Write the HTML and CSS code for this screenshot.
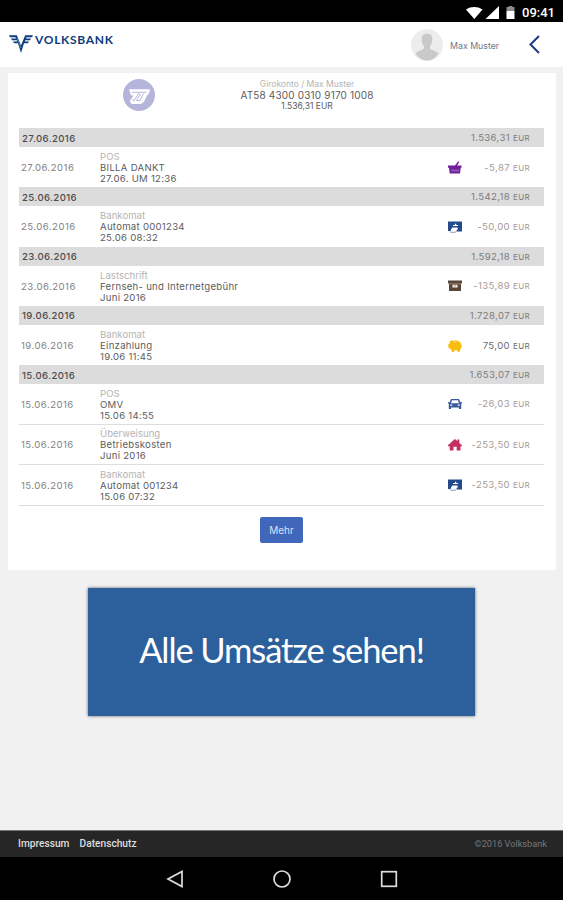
FILE: index.html
```html
<!DOCTYPE html>
<html lang="de">
  <head>
    <meta charset="UTF-8" />
    <meta name="viewport" content="width=device-width, initial-scale=1.0" />
    <title>Volksbank Umsätze</title>
    <link rel="stylesheet" href="styles.css">
  </head>
  <body>
    <svg class="sprite" aria-hidden="true">
      <symbol id="icon-basket" viewBox="0 0 14 14">
        <path fill="#6f1e9c" d="M0 4.500h7L10.200.2l1.200.8L9 4.500h4.500v2.300h-.8L12 12.500H1.700L1 6.800H0z" />
        <path stroke="#d5b5e6" stroke-width=".7" d="M4 8.500v2M6 8.500v2M8 8.500v2M10 8.500v2" />
      </symbol>
      <symbol id="icon-atm" viewBox="0 0 14 14">
        <path fill="#234b8c" d="M0 1.500h14v10H8.500L10 8H4L2.500 11H0z" />
        <path fill="#fff" d="M7 3.800h1.200v1.200H10v1H5V5h2zM4.300 7.500h5.200L7.800 11.600H2.500z" />
        <path fill="none" stroke="#6d8eb5" stroke-width=".8" d="M1.500 11.300l1.500 1h4.500l1.200-2" />
      </symbol>
      <symbol id="icon-box" viewBox="0 0 14 14">
        <path fill="#5c4638" d="M0 1.500h14v3h-1v7.500H1V4.500H0z" />
        <path fill="#a58d77" d="M1 4.400h12v.8H1z" />
        <path fill="#fff" d="M4.500 5.800h5v2.700h-5z" />
        <path fill="#a58d77" d="M5.700 6.500h2.700v1H5.700z" />
      </symbol>
      <symbol id="icon-pig" viewBox="0 0 14 14">
        <path fill="#f9bd10" d="M2 2.500L3.500 1l1.700 1C8.500.8 12.500 2 13.200 5l.6 2.500-1.300 2.200-.7 3H9.500l-.4-1.500H6.500L6.200 13H4l-.7-2.500L.3 8.500V5.200l1.200-.4z" />
        <path stroke="#fff" stroke-width=".5" d="M6 3.300l2.500-.3" />
      </symbol>
      <symbol id="icon-car" viewBox="0 0 14 14">
        <path fill="#38599a" fill-rule="evenodd" d="M3 2h8l1.500 3.400L14 5v1.300l-.8.500V12H11v-1.500H3V12H.8V6.800L0 6.300V5l1.500.4zM4 3.300L3 6.300h8l-1-3zM2.200 7.500v1.300h2V7.500zm7.600 0v1.300h2V7.500z" />
      </symbol>
      <symbol id="icon-house" viewBox="0 0 14 14">
        <path fill="#c22f60" d="M0 7.200L6.800 1l2.500 2V1.500h2V5L14 7.200v1h-1.500V12.500H8.700V8.700H5.500v3.800H1.700V8.200H0z" />
      </symbol>
    </svg>

    <div class="status-bar">
      <svg class="status-icons" viewBox="0 0 50 14">
        <path fill="#fff" d="M0 3.500C5 .2 11.500.2 16.500 3.500L8.300 13zM19.500 13L33 0v13z" />
        <path fill="#8b8b8b" d="M40.500 1h2.200V0h3.600v1h2.200v4h-8z" />
        <path fill="#fff" d="M40.500 5h8v8h-8z" />
      </svg>
      <span class="status-time">09:41</span>
    </div>

    <header class="app-header">
      <svg class="logo-mark" viewBox="0 0 24 18">
        <path fill="#0d3b7c" d="M0 .3h7.800L12 10.500 16.200.3H24l-1 2h-5.500l-.5 1.200h5L21 5.300h-4.800l-.5 1.200h4.500l-1.500 1.700H15L12 18 9 8.200H5.300L3.800 6.500h4.500l-.5-1.200H3L2 3.500h5l-.5-1.200H1z" />
        <path fill="none" stroke="#5f9cca" stroke-width=".8" d="M8 3l4 10" />
      </svg>
      <span class="logo-text">VOLKSBANK</span>
      <svg class="avatar" viewBox="0 0 32 32">
        <circle cx="16" cy="16" r="16" fill="#ededed" />
        <path fill="#c9c9c9" d="M16 4.500c3.800 0 5.700 2.800 5.400 6.500-.2 3-1.300 4.800-2.400 6v2.500c1.200 1.500 6 2.200 8.500 4.800C25 28.500 21 31.500 16 31.500S7 28.500 4.500 24.300C7 21.700 11.800 21 13 19.500V17c-1.100-1.200-2.200-3-2.400-6-.3-3.700 1.600-6.500 5.400-6.500z" />
      </svg>
      <span class="user-name">Max Muster</span>
      <svg class="back-icon" viewBox="0 0 11 19">
        <path fill="none" stroke="#203a80" stroke-width="2" d="M10 1L1.500 9.500 10 18" />
      </svg>
    </header>

    <main class="content">
      <section class="panel">
        <div class="account">
          <svg class="account-icon" viewBox="0 0 32 32">
            <circle cx="16" cy="16" r="16" fill="#b5b5dc" />
            <path fill="#fff" d="M6 10.300h21l-1 4-2 2.200-3.200 6.500-3 2H8.500L6.800 22l3.700-5.500H8z" />
            <path fill="none" stroke="#b5b5dc" stroke-width="1" d="M9 13.300h14.500M16 14l-5 7.500M20.500 14.500l-3.500 7h-3.500l4-6.500M9 20.800l2.500 1" />
          </svg>
          <div class="account-info">
            <div class="account-type">Girokonto / Max Muster</div>
            <div class="account-iban">AT58 4300 0310 9170 1008</div>
            <div class="account-balance">1.536,31 EUR</div>
          </div>
        </div>

        <div class="day">
          <span>27.06.2016</span>
          <span class="day-balance">1.536,31 <small>EUR</small></span>
        </div>
        <article class="booking">
          <span class="booking-date">27.06.2016</span>
          <div class="booking-text">
            <div class="booking-type">POS</div>
            <div>BILLA DANKT</div>
            <div>27.06. UM 12:36</div>
          </div>
          <svg class="booking-icon"><use href="#icon-basket" /></svg>
          <span class="amount">-5,87 <small>EUR</small></span>
        </article>

        <div class="day">
          <span>25.06.2016</span>
          <span class="day-balance">1.542,18 <small>EUR</small></span>
        </div>
        <article class="booking">
          <span class="booking-date">25.06.2016</span>
          <div class="booking-text">
            <div class="booking-type">Bankomat</div>
            <div>Automat 0001234</div>
            <div>25.06 08:32</div>
          </div>
          <svg class="booking-icon"><use href="#icon-atm" /></svg>
          <span class="amount">-50,00 <small>EUR</small></span>
        </article>

        <div class="day">
          <span>23.06.2016</span>
          <span class="day-balance">1.592,18 <small>EUR</small></span>
        </div>
        <article class="booking">
          <span class="booking-date">23.06.2016</span>
          <div class="booking-text">
            <div class="booking-type">Lastschrift</div>
            <div>Fernseh- und Internetgebühr</div>
            <div>Juni 2016</div>
          </div>
          <svg class="booking-icon"><use href="#icon-box" /></svg>
          <span class="amount">-135,89 <small>EUR</small></span>
        </article>

        <div class="day">
          <span>19.06.2016</span>
          <span class="day-balance">1.728,07 <small>EUR</small></span>
        </div>
        <article class="booking">
          <span class="booking-date">19.06.2016</span>
          <div class="booking-text">
            <div class="booking-type">Bankomat</div>
            <div>Einzahlung</div>
            <div>19.06 11:45</div>
          </div>
          <svg class="booking-icon"><use href="#icon-pig" /></svg>
          <span class="amount is-credit">75,00 <small>EUR</small></span>
        </article>

        <div class="day">
          <span>15.06.2016</span>
          <span class="day-balance">1.653,07 <small>EUR</small></span>
        </div>
        <article class="booking has-line">
          <span class="booking-date">15.06.2016</span>
          <div class="booking-text">
            <div class="booking-type">POS</div>
            <div>OMV</div>
            <div>15.06 14:55</div>
          </div>
          <svg class="booking-icon"><use href="#icon-car" /></svg>
          <span class="amount">-26,03 <small>EUR</small></span>
        </article>
        <article class="booking has-line">
          <span class="booking-date">15.06.2016</span>
          <div class="booking-text">
            <div class="booking-type">Überweisung</div>
            <div>Betriebskosten</div>
            <div>Juni 2016</div>
          </div>
          <svg class="booking-icon"><use href="#icon-house" /></svg>
          <span class="amount">-253,50 <small>EUR</small></span>
        </article>
        <article class="booking has-line">
          <span class="booking-date">15.06.2016</span>
          <div class="booking-text">
            <div class="booking-type">Bankomat</div>
            <div>Automat 001234</div>
            <div>15.06 07:32</div>
          </div>
          <svg class="booking-icon"><use href="#icon-atm" /></svg>
          <span class="amount">-253,50 <small>EUR</small></span>
        </article>

        <button class="more-button">Mehr</button>
      </section>

      <div class="banner">Alle Umsätze sehen!</div>
    </main>

    <footer class="app-footer">
      <a class="footer-link">Impressum</a>
      <a class="footer-link">Datenschutz</a>
      <span class="copyright">©2016 Volksbank</span>
    </footer>

    <nav class="nav-bar">
      <svg class="nav-icon" viewBox="0 0 18 18">
        <path d="M16 1.500v15L2 9z" />
      </svg>
      <svg class="nav-icon" viewBox="0 0 18 18">
        <circle cx="9" cy="9" r="8" />
      </svg>
      <svg class="nav-icon" viewBox="0 0 18 18">
        <rect x="1.700" y="1.700" width="14.600" height="14.600" />
      </svg>
    </nav>
  </body>
</html>
```
FILE: styles.css
```css
:root {
  --page-bg: #f1f1f1;
  --bar-bg: #dcdcdc;
  --text: #5c5c5c;
  --muted: #b4b4b4;
  --banner: #2b609c;
}

*,
*::before,
*::after {
  box-sizing: border-box;
  margin: 0;
  padding: 0;
}

body {
  display: flex;
  flex-direction: column;
  height: 900px;
  overflow: hidden;
  font-family: Inter, Roboto, sans-serif;
  font-size: 9.6px;
  line-height: 11px;
  color: var(--text);
  background: var(--page-bg);
}

.sprite {
  display: none;
}

.status-bar {
  display: flex;
  justify-content: flex-end;
  align-items: center;
  gap: 6px;
  height: 22px;
  padding: 3px 8px 0 0;
  background: #000;
  color: #fff;
}

.status-icons {
  width: 50px;
  height: 14px;
}

.status-time {
  font: 500 13px/14px Roboto, sans-serif;
}

.app-header {
  display: flex;
  align-items: center;
  height: 45px;
  padding: 0 23px 0 9px;
  background: #fff;
}

.logo-mark {
  width: 24px;
  height: 18px;
  margin: 0 2px 2px 0;
}

.logo-text {
  margin-bottom: 9px;
  font: 700 12px/14px Lato, sans-serif;
  letter-spacing: 0.7px;
  color: #0d3b7c;
}

.avatar {
  width: 32px;
  height: 32px;
  margin-left: auto;
}

.user-name {
  width: 49px;
  margin: 2px 0 0 7px;
  font-size: 8.8px;
  white-space: nowrap;
  color: #6a7990;
}

.back-icon {
  width: 11px;
  height: 19px;
  margin-left: 30px;
}

.content {
  flex: 1;
  padding: 6px 7px 0 8px;
}

.panel {
  display: flex;
  flex-direction: column;
  height: 497px;
  padding: 0 12px 0 11px;
  background: #fff;
}

.account {
  display: flex;
  align-items: flex-start;
  height: 55px;
  padding: 6px 0 0 104px;
}

.account-icon {
  width: 32px;
  height: 32px;
}

.account-info {
  width: 152px;
  margin-left: 76px;
  text-align: center;
  white-space: nowrap;
}

.account-type {
  font-size: 8.5px;
  color: var(--muted);
}

.account-iban {
  font-size: 10px;
  letter-spacing: 0.17px;
}

.account-balance {
  font-size: 8.5px;
}

.day {
  display: flex;
  justify-content: space-between;
  align-items: center;
  height: 19px;
  padding: 1px 14px 0 3px;
  background: var(--bar-bg);
  color: #4c4c4c;
  font-weight: 500;
  letter-spacing: 0.38px;
}

.day-balance {
  font-weight: 400;
  letter-spacing: 0.35px;
  color: #7d7d7d;
}

small {
  font-size: 8px;
}

.booking {
  display: grid;
  grid-template-columns: 79px 1fr 14px 68px;
  align-items: center;
  height: 40.3px;
  padding: 1px 14px 0 2px;
}

.booking.has-line {
  height: 40.5px;
  border-bottom: 1.500px solid #dedede;
}

.booking-date {
  letter-spacing: 0.45px;
  color: #828282;
}

.booking-text {
  letter-spacing: 0.27px;
}

.booking-type {
  letter-spacing: 0;
  color: var(--muted);
}

.booking-icon {
  width: 14px;
  height: 14px;
}

.amount {
  text-align: right;
  letter-spacing: 0.35px;
  color: #a89b98;
}

.amount.is-credit {
  color: #6c6c6c;
}

.more-button {
  align-self: center;
  width: 43px;
  height: 26px;
  margin-top: 11px;
  border: 0;
  border-radius: 2px;
  font: 400 10px Inter, sans-serif;
  color: #d9e0f4;
  background: #4167bb;
}

.banner {
  display: flex;
  justify-content: center;
  align-items: center;
  width: 387px;
  height: 128px;
  margin: 18px 0 0 80px;
  padding-bottom: 5px;
  background: var(--banner);
  box-shadow: 0 0 3px rgba(0, 0, 0, 0.6);
  font: 400 34.5px Lato, sans-serif;
  letter-spacing: -1.1px;
  color: #fff;
}

.app-footer {
  display: flex;
  align-items: center;
  gap: 10px;
  height: 27px;
  padding: 0 16px 2px 18px;
  border-top: 1px solid #777;
  background: #262626;
}

.footer-link {
  font: 500 10.2px Roboto, sans-serif;
  color: #ddd;
}

.copyright {
  margin-left: auto;
  font: 400 9.2px Roboto, sans-serif;
  color: #777;
}

.nav-bar {
  display: flex;
  justify-content: center;
  align-items: center;
  gap: 89px;
  height: 43px;
  background: #000;
}

.nav-icon {
  width: 18px;
  height: 18px;
  fill: none;
  stroke: #ddd;
  stroke-width: 1.7;
}
```
